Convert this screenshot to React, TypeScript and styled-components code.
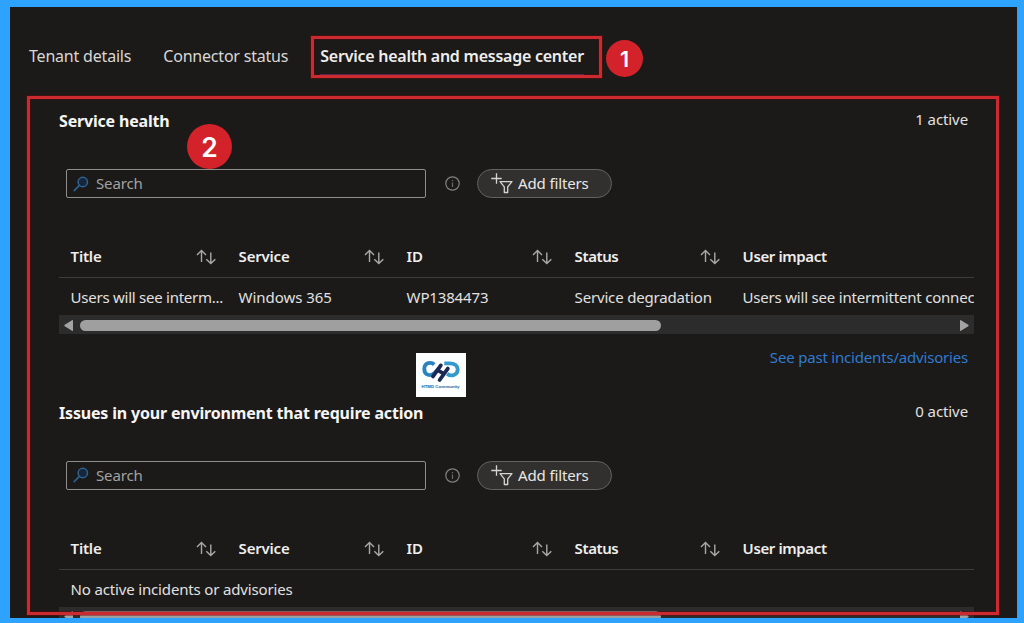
import React from "react";
import styled, { createGlobalStyle } from "styled-components";

const Global = createGlobalStyle`
  *, *::before, *::after { box-sizing: border-box; }
  html, body { margin: 0; padding: 0; overflow: hidden; background: #2ea3fe; }
  body { font-family: "Noto Sans", "Open Sans", sans-serif; font-size: 15px; color: #e2e1e0; }
`;

const Frame = styled.div`
  position: relative;
  width: 1024px;
  height: 623px;
  padding: 7px 7px 5px 10px;
  background: #2ea3fe;
`;

const Blade = styled.main`
  height: 611px;
  overflow: hidden;
  background: #1b1a19;
`;

const Tabs = styled.nav`
  display: flex;
  gap: 32px;
  height: 102px;
  padding: 36px 0 0 19px;
  font-size: 16px;
`;

const Tab = styled.a<{ $active?: boolean }>`
  height: 33px;
  line-height: 26px;
  white-space: nowrap;
  letter-spacing: ${(p) => (p.$active ? -0.25 : -0.2)}px;
  font-weight: ${(p) => (p.$active ? 600 : 400)};
  color: ${(p) => (p.$active ? "#efeeed" : "#d8d7d6")};
  border-bottom: 2px solid ${(p) => (p.$active ? "#5b3f7c" : "transparent")};
`;

const Section = styled.section`
  width: 915px;
  height: 291.5px;
  margin-left: 49px;
`;

const SectionHeader = styled.header`
  display: flex;
  justify-content: space-between;
  height: 24px;
  padding-right: 6px;
`;

const Heading = styled.h2`
  margin: 0;
  font-size: 16px;
  line-height: 24px;
  font-weight: 700;
  letter-spacing: -0.18px;
  color: #f6f5f4;
`;

const Count = styled.span`
  letter-spacing: -0.1px;
  line-height: 21px;
`;

const Toolbar = styled.div`
  display: flex;
  align-items: center;
  height: 29px;
  margin: 36px 0 0 7px;
`;

const SearchBox = styled.div`
  display: flex;
  align-items: center;
  gap: 7px;
  width: 360px;
  height: 29px;
  padding-left: 6px;
  border: 1px solid #8f8e8d;
  border-radius: 2px;
  color: #a3a2a0;
`;

const SearchText = styled.span`
  height: 27px;
  line-height: 26px;
  letter-spacing: -0.15px;
`;

const InfoSlot = styled.span`
  display: flex;
  justify-content: center;
  width: 52px;
  margin-right: -1px;
`;

const FilterButton = styled.button`
  display: flex;
  align-items: center;
  gap: 5px;
  width: 135px;
  height: 29px;
  padding: 0 0 0 13px;
  border: 1px solid #636261;
  border-radius: 15px;
  background: #31302f;
  color: #e8e7e6;
  font: inherit;
  letter-spacing: -0.13px;
  white-space: nowrap;
`;

const FilterText = styled.span`
  height: 27px;
  line-height: 26px;
`;

const Grid = styled.div`
  margin-top: 39px;
  overflow: hidden;
`;

const GridRow = styled.div<{ $head?: boolean }>`
  display: grid;
  grid-template-columns: repeat(4, 168px) 243px;
  height: ${(p) => (p.$head ? 41 : 37)}px;
  line-height: 24px;
  padding: ${(p) => (p.$head ? "0 0 2px" : "1px 0 0")};
  border-bottom: ${(p) => (p.$head ? "1px solid #3d3c3b" : "0")};
  font-weight: ${(p) => (p.$head ? 600 : 400)};
  color: ${(p) => (p.$head ? "#efeeed" : "#e2e1e0")};
`;

const Cell = styled.div<{ $wide?: boolean; $clip?: boolean; $spacing?: number }>`
  display: flex;
  align-items: center;
  justify-content: space-between;
  grid-column: ${(p) => (p.$wide ? "1 / -1" : "auto")};
  padding: 0 ${(p) => (p.$clip ? 0 : 11)}px 0 11.6px;
  overflow: hidden;
  white-space: nowrap;
  letter-spacing: ${(p) => p.$spacing ?? -0.2}px;

  svg {
    margin-top: 2px;
  }
`;

const ScrollTrack = styled.div`
  display: flex;
  align-items: center;
  height: 19px;
  padding: 1px 5px 0;
  background: #2d2c2c;
`;

const ScrollThumb = styled.div`
  width: 581px;
  height: 11px;
  margin: 0 299px 0 7px;
  border-radius: 6px;
  background: #9f9f9f;
`;

const LinkRow = styled.div`
  display: flex;
  justify-content: flex-end;
  padding: 11px 6px 0 0;
`;

const PastLink = styled.a`
  line-height: 24px;
  letter-spacing: -0.19px;
  color: #2f7bd0;
`;

const Outline = styled.div<{ $x: number; $y: number; $w: number; $h: number }>`
  position: absolute;
  left: ${(p) => p.$x}px;
  top: ${(p) => p.$y}px;
  width: ${(p) => p.$w}px;
  height: ${(p) => p.$h}px;
  border: 3px solid #ca2a30;
  box-shadow: 0 0 0 1px rgba(110, 10, 14, 0.45), inset 0 0 0 1px rgba(90, 5, 8, 0.45);
`;

const Marker = styled.div<{ $x: number; $y: number; $size: number; $font: number }>`
  position: absolute;
  left: ${(p) => p.$x}px;
  top: ${(p) => p.$y}px;
  display: flex;
  align-items: center;
  justify-content: center;
  width: ${(p) => p.$size}px;
  height: ${(p) => p.$size}px;
  border-radius: 50%;
  background: #d3222a;
  color: #fff;
  font: 600 ${(p) => p.$font}px Inter, "Liberation Sans", sans-serif;
`;

const Watermark = styled.div`
  position: absolute;
  left: 415.5px;
  top: 353px;
  display: flex;
  flex-direction: column;
  align-items: center;
  width: 50px;
  height: 44px;
  padding-top: 7px;
  background: #fdfefe;
  color: #2a5f93;
  font: 700 4.4px/8px "Liberation Sans", sans-serif;
  white-space: nowrap;
`;

const SearchIcon = () => (
  <svg width="16" height="16" viewBox="0 0 16 16" fill="none" stroke="#2d6496" strokeWidth="1.5" strokeLinecap="round">
    <circle cx="9.8" cy="6" r="4.7" fill="#172638" />
    <path d="M6.4 9.4 1.2 14.6" />
  </svg>
);

const InfoIcon = () => (
  <svg width="15" height="15" viewBox="0 0 15 15" fill="none" stroke="#82817f" strokeWidth="1.2">
    <circle cx="7.5" cy="7.5" r="6.7" />
    <path d="M7.5 6.6V11M7.5 4v1.3" stroke="#6b6a69" />
  </svg>
);

const FilterIcon = () => (
  <svg width="22" height="21" viewBox="0 0 22 21" fill="none" stroke="#d5d4d3" strokeWidth="1.3">
    <path d="M5.5.3v10.4M.3 5.5h10.4" />
    <path d="M9 8.7h12l-4.3 5.2v5.6h-3.4v-5.6z" strokeLinejoin="round" />
  </svg>
);

const SortIcon = () => (
  <svg width="20" height="16" viewBox="0 0 20 16" fill="none" stroke="#a9a8a7" strokeWidth="1.4">
    <path d="M5.5 13V1.7M1 6l4.5-4.4L10 6" />
    <path d="M14.8 3.5v11M10.3 10.2l4.5 4.4 4.5-4.4" />
  </svg>
);

const ScrollArrow = ({ right }: { right?: boolean }) => (
  <svg width="9" height="11" viewBox="0 0 9 11" fill="#a3a3a3">
    <path d={right ? "M0 .8Q0-.3 1 .3L8.3 4.8Q9 5.5 8.3 6.2L1 10.7Q0 11.3 0 10.2z" : "M9 .8Q9-.3 8 .3L.7 4.8Q0 5.5.7 6.2L8 10.7Q9 11.3 9 10.2z"} />
  </svg>
);

const CommunityLogo = () => (
  <svg width="38" height="23" viewBox="0 0 38 23" fill="none" strokeWidth="3.8">
    <path d="M12.2 4.6C9.6 1.8 2.3 2.2 2.3 9c0 6.4 6.4 7.6 10 4.2l4.2-4.4" stroke="#2b83bd" />
    <path d="M22.3 3.3h5.2c5.2 0 8.2 2.4 8.2 6.2 0 5.6-6.6 7.6-10.6 4.2" stroke="#3499cb" />
    <path d="m11 16.4 7.8-11M17.6 20l8.2-11.4M15.8 10.4l5.6 3" stroke="#1c2754" strokeLinecap="round" />
  </svg>
);

const columns = ["Title", "Service", "ID", "Status", "User impact"];
const columnSpacing = [-0.2, -0.2, -0.2, -0.4, -0.38];
const cellSpacing = [-0.25, -0.05, -0.15, -0.17, -0.2];

type PanelProps = {
  title: string;
  count: string;
  cells?: string[];
  link?: string;
};

const HealthPanel = ({ title, count, cells, link }: PanelProps) => (
  <Section>
    <SectionHeader>
      <Heading>{title}</Heading>
      <Count>{count}</Count>
    </SectionHeader>
    <Toolbar>
      <SearchBox>
        <SearchIcon />
        <SearchText>Search</SearchText>
      </SearchBox>
      <InfoSlot>
        <InfoIcon />
      </InfoSlot>
      <FilterButton>
        <FilterIcon />
        <FilterText>Add filters</FilterText>
      </FilterButton>
    </Toolbar>
    <Grid>
      <GridRow $head>
        {columns.map((name, i) => (
          <Cell key={name} $clip={i === 4} $spacing={columnSpacing[i]}>
            {name}
            {i < 4 && <SortIcon />}
          </Cell>
        ))}
      </GridRow>
      <GridRow>
        {cells ? (
          cells.map((text, i) => (
            <Cell key={text} $clip $spacing={cellSpacing[i]}>
              {text}
            </Cell>
          ))
        ) : (
          <Cell $wide $spacing={-0.16}>
            No active incidents or advisories
          </Cell>
        )}
      </GridRow>
      <ScrollTrack>
        <ScrollArrow />
        <ScrollThumb />
        <ScrollArrow right />
      </ScrollTrack>
    </Grid>
    {link && (
      <LinkRow>
        <PastLink>{link}</PastLink>
      </LinkRow>
    )}
  </Section>
);

export default function App() {
  return (
    <>
      <Global />
      <Frame>
        <Blade>
          <Tabs>
            <Tab>Tenant details</Tab>
            <Tab>Connector status</Tab>
            <Tab $active>Service health and message center</Tab>
          </Tabs>
          <HealthPanel
            title="Service health"
            count="1 active"
            cells={["Users will see interm...", "Windows 365", "WP1384473", "Service degradation", "Users will see intermittent connec"]}
            link="See past incidents/advisories"
          />
          <HealthPanel title="Issues in your environment that require action" count="0 active" />
        </Blade>
        <Outline $x={311} $y={36} $w={291} $h={42} />
        <Outline $x={27} $y={96} $w={972} $h={519} />
        <Marker $x={606} $y={40} $size={37} $font={21.5}>1</Marker>
        <Marker $x={187} $y={124} $size={45} $font={26.5}>2</Marker>
        <Watermark>
          <CommunityLogo />
          HTMD Community
        </Watermark>
      </Frame>
    </>
  );
}
